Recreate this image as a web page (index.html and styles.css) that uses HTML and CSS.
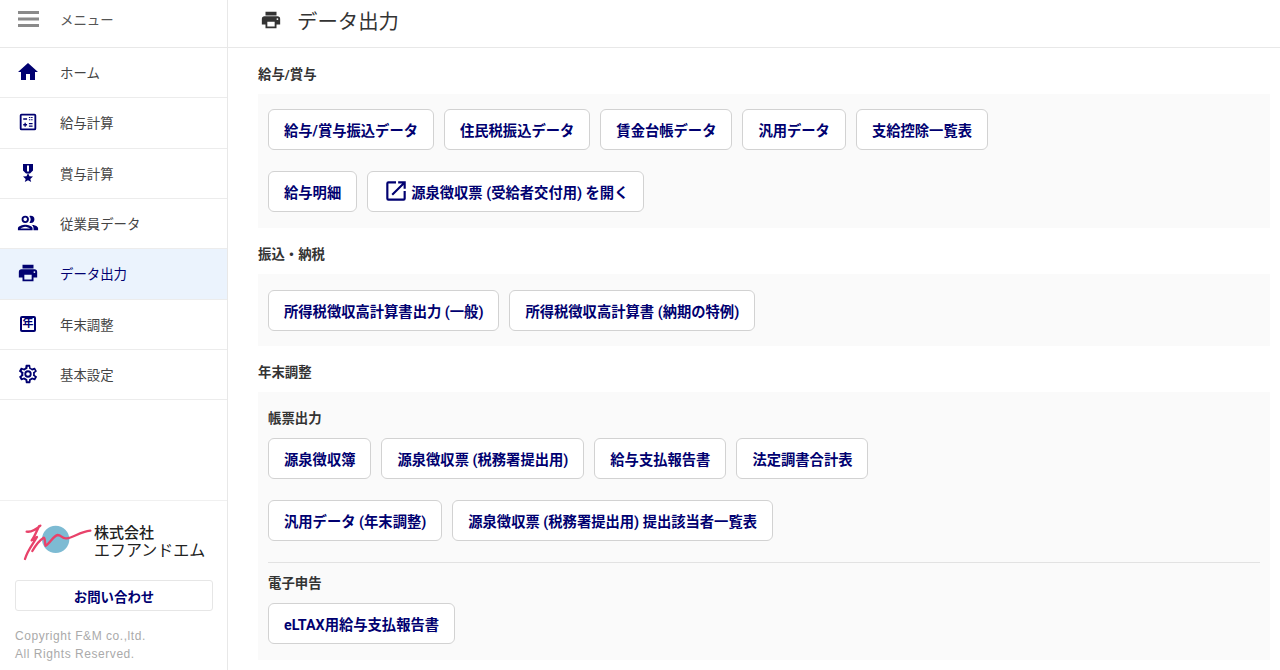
FILE: index.html
```html
<!DOCTYPE html>
<html lang="ja">
<head>
<meta charset="utf-8">
<title>データ出力</title>
<link rel="stylesheet" href="styles.css">
</head>
<body>
<div class="app">
  <aside class="sidebar">
    <div class="menu-head">
      <span class="ico-box"><svg class="ico burger" viewBox="0 0 21 16"><path d="M0 0h21v3H0zM0 6.500h21v3H0zM0 13h21v3H0z"/></svg></span>
      <span>メニュー</span>
    </div>
    <nav class="nav">
      <a class="nav-item"><span class="ico-box"><svg class="ico" viewBox="0 0 24 24"><path d="M10 20v-6h4v6h5v-8h3L12 3 2 12h3v8z"/></svg></span><span>ホーム</span></a>
      <a class="nav-item"><span class="ico-box"><svg class="ico s22" viewBox="0 0 24 24"><path fill-rule="evenodd" d="M5 3h14a2 2 0 0 1 2 2v14a2 2 0 0 1-2 2H5a2 2 0 0 1-2-2V5a2 2 0 0 1 2-2zm0 2v14h14V5z"/><path d="M6.800 8h4.200v1.500H6.800zM13 6.500h1.600v1H13zM15.400 6.500H17v1h-1.600zM13 9h1.600v1H13zM15.400 9H17v1h-1.600zM6.800 14.300h1.400v-1.500h1.400v1.500H11v1.400H9.600v1.500H8.200v-1.500H6.800zM13 13h4v1.400h-4zM13 15.800h4v1.400h-4z"/></svg></span><span>給与計算</span></a>
      <a class="nav-item"><span class="ico-box"><svg class="medal" viewBox="0 0 10 18"><path fill-rule="evenodd" d="M0 0h10v6.500L7 9.500H3L0 6.500zM4 1.500v6h2v-6z"/><path d="M5 9l1.500 3.300 3.500.3-2.700 2.300.9 3.100L5 16.300 1.800 18l.9-3.100L0 12.600l3.500-.3z"/></svg></span><span>賞与計算</span></a>
      <a class="nav-item"><span class="ico-box"><svg class="ico s22" viewBox="0 0 24 24"><path d="M9 13.800c-2.800 0-8 1.300-8 4V20h16v-2.200c0-2.700-5.200-4-8-4zM3.700 18c.9-.8 3.500-2 5.300-2s4.400 1.200 5.300 2zM9 12a4 4 0 1 0 0-8 4 4 0 0 0 0 8zm0-6a2 2 0 1 1 0 4 2 2 0 0 1 0-4zm7 7.900c1.200.9 2 2 2 3.900V20h5v-2.200c0-2.400-4.200-3.600-7-3.900zM15 12a4 4 0 0 0 0-8c-.5 0-1 .1-1.500.3a6 6 0 0 1 0 7.400c.5.200 1 .3 1.500.3z"/></svg></span><span>従業員データ</span></a>
      <a class="nav-item active"><span class="ico-box"><svg class="ico s22" viewBox="0 0 24 24"><path d="M19 8H5a3 3 0 0 0-3 3v6h4v4h12v-4h4v-6a3 3 0 0 0-3-3zm-3 11H8v-5h8zm3-7a1 1 0 1 1 0-2 1 1 0 0 1 0 2zM18 3H6v4h12z"/></svg></span><span>データ出力</span></a>
      <a class="nav-item"><span class="ico-box"><span class="nen">年</span></span><span>年末調整</span></a>
      <a class="nav-item"><span class="ico-box"><svg class="ico s22" viewBox="0 0 24 24"><path d="M19.400 13a7.700 7.700 0 0 0 0-2l2.100-1.600a.5.5 0 0 0 .1-.6l-2-3.500a.5.5 0 0 0-.6-.2l-2.500 1a7.300 7.300 0 0 0-1.700-1l-.4-2.700a.5.5 0 0 0-.5-.4h-4a.5.5 0 0 0-.5.4l-.4 2.700a7.700 7.700 0 0 0-1.700 1l-2.500-1a.5.5 0 0 0-.6.2l-2 3.500a.5.5 0 0 0 .1.600L4.600 11a7.900 7.900 0 0 0 0 2l-2.100 1.600a.5.5 0 0 0-.1.600l2 3.500c.1.200.4.300.6.200l2.500-1c.5.400 1.100.7 1.700 1l.4 2.700c0 .2.200.4.500.4h4c.3 0 .5-.2.500-.4l.4-2.700a7.300 7.300 0 0 0 1.700-1l2.500 1c.2.100.5 0 .6-.2l2-3.500a.5.5 0 0 0-.1-.6zm-1.900-1.700c.1.300.1.500.1.700s0 .5-.1.700l-.1 1.100.9.700 1.100.9-.7 1.200-1.300-.5-1-.4-.9.700c-.4.300-.8.500-1.200.7l-1 .4-.2 1.100-.2 1.300h-1.400l-.2-1.300-.2-1.100-1-.4c-.4-.2-.8-.4-1.200-.7l-.9-.7-1 .4-1.300.5-.7-1.200 1.100-.9.900-.7-.1-1.100V12c0-.2 0-.4.1-.7l.1-1.100-.9-.7-1.100-.9.700-1.200 1.300.5 1 .4.900-.7c.4-.3.800-.5 1.200-.7l1-.4.200-1.100.2-1.300h1.400l.2 1.300.2 1.100 1 .4c.4.200.8.400 1.200.7l.9.7 1-.4 1.300-.5.700 1.200-1.100.9-.9.700zM12 8a4 4 0 1 0 0 8 4 4 0 0 0 0-8zm0 6a2 2 0 1 1 0-4 2 2 0 0 1 0 4z"/></svg></span><span>基本設定</span></a>
    </nav>
    <div class="side-foot">
      <div class="logo">
        <svg class="logo-mark" viewBox="0 0 240 165"><circle cx="122" cy="73" r="41" fill="#7dbbd3"/><path fill="none" stroke="#e8426a" stroke-width="7" stroke-linecap="round" stroke-linejoin="round" d="M35 50C50 52 62 45 76 32M72 34C62 55 56 70 50 76L66 66C52 90 38 105 30 132M52 108C62 90 75 75 86 68C92 70 88 85 92 92C105 85 115 62 128 60C140 60 140 72 155 70C175 68 195 50 226 47"/></svg>
        <div class="logo-text"><div class="logo-l1">株式会社</div><div>エフアンドエム</div></div>
      </div>
      <button class="contact">お問い合わせ</button>
      <p class="copy">Copyright F&amp;M co.,ltd.<br>All Rights Reserved.</p>
    </div>
  </aside>
  <main class="main">
    <header class="page-head">
      <svg class="head-ico" viewBox="0 0 24 24"><path d="M19 8H5a3 3 0 0 0-3 3v6h4v4h12v-4h4v-6a3 3 0 0 0-3-3zm-3 11H8v-5h8zm3-7a1 1 0 1 1 0-2 1 1 0 0 1 0 2zM18 3H6v4h12z"/></svg>
      <h1>データ出力</h1>
    </header>
    <div class="content">
      <h2>給与/賞与</h2>
      <section class="panel panel-a">
        <div class="btns">
          <button class="btn">給与/賞与振込データ</button>
          <button class="btn">住民税振込データ</button>
          <button class="btn">賃金台帳データ</button>
          <button class="btn">汎用データ</button>
          <button class="btn">支給控除一覧表</button>
        </div>
        <div class="btns second">
          <button class="btn">給与明細</button>
          <button class="btn"><svg class="ext" viewBox="0 0 24 24"><path d="M19 19H5V5h7V3H5a2 2 0 0 0-2 2v14a2 2 0 0 0 2 2h14a2 2 0 0 0 2-2v-7h-2zM14 3v2h3.600l-9.800 9.800 1.400 1.400L19 6.400V10h2V3z"/></svg>源泉徴収票 (受給者交付用) を開く</button>
        </div>
      </section>
      <h2>振込・納税</h2>
      <section class="panel panel-b">
        <div class="btns">
          <button class="btn">所得税徴収高計算書出力 (一般)</button>
          <button class="btn">所得税徴収高計算書 (納期の特例)</button>
        </div>
      </section>
      <h2>年末調整</h2>
      <section class="panel panel-tall">
        <h3>帳票出力</h3>
        <div class="btns">
          <button class="btn">源泉徴収簿</button>
          <button class="btn">源泉徴収票 (税務署提出用)</button>
          <button class="btn">給与支払報告書</button>
          <button class="btn">法定調書合計表</button>
        </div>
        <div class="btns second">
          <button class="btn">汎用データ (年末調整)</button>
          <button class="btn">源泉徴収票 (税務署提出用) 提出該当者一覧表</button>
        </div>
        <hr class="rule">
        <h3 class="e-title">電子申告</h3>
        <div class="btns">
          <button class="btn">eLTAX用給与支払報告書</button>
        </div>
      </section>
    </div>
  </main>
</div>
</body>
</html>
```
FILE: styles.css
```css
* { box-sizing: border-box; }
html, body { margin: 0; height: 100%; }
body {
  font-family: Roboto, "Noto Sans CJK JP", sans-serif;
  color: #333;
  background: #fff;
  overflow: hidden;
}
.app { display: flex; height: 670px; }
.sidebar {
  width: 228px;
  flex: none;
  border-right: 1px solid #e8e8e8;
  display: flex;
  flex-direction: column;
}
.menu-head {
  height: 48px;
  display: flex;
  align-items: center;
  padding: 0 0 9px 16px;
  border-bottom: 1px solid #e8e8e8;
  font-size: 13.400px;
  color: #555;
}
.ico-box {
  width: 24px;
  height: 24px;
  margin-right: 20px;
  flex: none;
  display: flex;
  align-items: center;
  justify-content: center;
}
.ico { width: 24px; height: 24px; flex: none; fill: #000070; }
.s22 { width: 22px; height: 22px; }
.burger { width: 21px; height: 16px; fill: #8a8a8a; }
.medal { width: 10px; height: 18px; fill: #000070; flex: none; }
.nav { display: flex; flex-direction: column; }
.nav-item {
  height: 50.330px;
  display: flex;
  align-items: center;
  padding: 0 0 1px 16px;
  border-bottom: 1.500px solid #ececec;
  font-size: 13.400px;
  color: #444;
}
.nav-item.active { background: #ebf3fd; color: #000070; }
.nen {
  width: 16px;
  height: 16px;
  border: 2px solid #000070;
  border-radius: 2px;
  color: #000070;
  font-size: 11px;
  line-height: 1;
  font-weight: 700;
  display: flex;
  align-items: center;
  justify-content: center;
  flex: none;
}
.side-foot {
  margin-top: auto;
  height: 170px;
  border-top: 1px solid #f0f0f0;
  padding: 14px 15px 0;
}
.logo { display: flex; align-items: center; height: 55px; }
.logo-mark { width: 80px; height: 55px; flex: none; }
.logo-text {
  font-size: 16px;
  line-height: 18px;
  color: #222;
  font-weight: 400;
  white-space: nowrap;
  padding-bottom: 2px;
  margin-left: -1px;
}
.logo-l1 { font-size: 15px; font-weight: 500; }
.contact {
  display: block;
  width: 198px;
  height: 31px;
  margin-top: 10px;
  background: #fff;
  border: 1px solid #e6e6e6;
  border-radius: 3px;
  font: 700 13.400px Roboto, "Noto Sans CJK JP", sans-serif;
  color: #000070;
}
.copy {
  margin: 16px 0 0;
  font: 12px/18px "Liberation Sans", sans-serif;
  color: #aaa;
  letter-spacing: .55px;
}
.main { flex: 1; min-width: 0; }
.page-head {
  height: 48px;
  display: flex;
  align-items: center;
  padding: 0 0 7px 32px;
  border-bottom: 1px solid #e8e8e8;
}
.head-ico { width: 22px; height: 22px; fill: #333; flex: none; margin-right: 15px; }
h1 { margin: 0; font-size: 20.400px; font-weight: 400; color: #333; }
.content { padding: 0 10px 0 30px; }
h2 {
  margin: 0;
  padding: 17px 0 10px;
  font-size: 13.400px;
  line-height: 19px;
  font-weight: 700;
  color: #333;
  height: 46px;
}
.panel { background: #fafafa; padding: 15px 10px; }
.panel-a { padding-bottom: 16px; }
.panel-b { padding-top: 16px; }
.panel-tall { height: 268px; padding-top: 17px; }
h3 { margin: 0 0 10px; font-size: 13.400px; line-height: 19px; font-weight: 700; color: #333; }
.btns { display: flex; gap: 10px; }
.second { margin-top: 21px; }
.btn {
  height: 41px;
  padding: 0 15px 1px;
  background: #fff;
  border: 1px solid #d2d2d2;
  border-radius: 6px;
  display: inline-flex;
  align-items: center;
  font: 700 14.300px Roboto, "Noto Sans CJK JP", sans-serif;
  color: #000070;
  white-space: nowrap;
}
.ext { width: 26px; height: 26px; fill: #000070; margin-right: 2px; flex: none; }
.rule { margin: 21px 0 0; border: 0; border-top: 1px solid #e2e2e2; }
.e-title { margin-top: 11px; }
```
